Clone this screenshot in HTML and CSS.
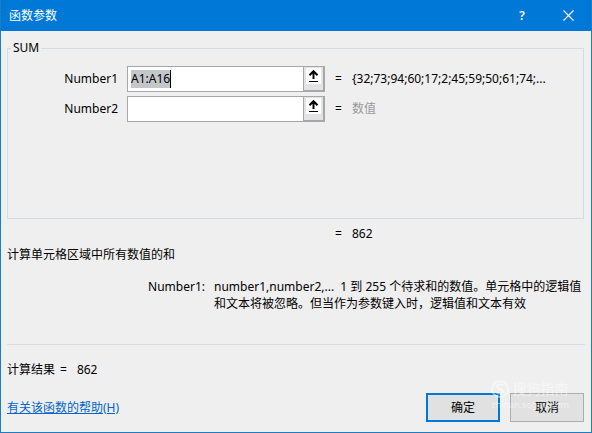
FILE: index.html
```html
<!DOCTYPE html>
<html lang="zh-CN">
<head>
    <meta charset="UTF-8">
    <meta name="viewport" content="width=device-width, initial-scale=1.0">
    <title>函数参数</title>
    <link rel="stylesheet" href="styles.css">
</head>
<body>

<div class="dialog">
    <header class="titlebar">
        <h1>函数参数</h1>
        <button type="button" class="title-btn" aria-label="帮助">?</button>
        <button type="button" class="title-btn" aria-label="关闭">
            <svg width="11" height="11" viewBox="0 0 11 11"><path d="M.5 .5l10 10M10.5 .5l-10 10" fill="none" stroke="#fff" stroke-width="1.1"/></svg>
        </button>
    </header>

    <form class="content">
        <fieldset class="arguments">
            <legend>SUM</legend>
            <div class="arg-row">
                <label for="number1">Number1</label>
                <div class="ref-box">
                    <span class="ref-field"><input type="text" id="number1" class="selected" value="A1:A16"></span>
                    <button type="button" class="ref-btn" aria-label="选择 Number1 区域">
                        <svg width="15" height="16" viewBox="0 0 15 16"><rect width="15" height="16" fill="#fff"/><path d="M3.5 7.2l4-4 4 4M7.5 3.5V11" fill="none" stroke="#000" stroke-width="2"/><path d="M3 13.5h9" stroke="#000"/></svg>
                    </button>
                </div>
                <span class="equals">=</span>
                <output class="value">{32;73;94;60;17;2;45;59;50;61;74;...</output>
            </div>
            <div class="arg-row">
                <label for="number2">Number2</label>
                <div class="ref-box">
                    <span class="ref-field"><input type="text" id="number2"></span>
                    <button type="button" class="ref-btn" aria-label="选择 Number2 区域">
                        <svg width="15" height="16" viewBox="0 0 15 16"><rect width="15" height="16" fill="#fff"/><path d="M3.5 7.2l4-4 4 4M7.5 3.5V11" fill="none" stroke="#000" stroke-width="2"/><path d="M3 13.5h9" stroke="#000"/></svg>
                    </button>
                </div>
                <span class="equals">=</span>
                <output class="value empty">数值</output>
            </div>
        </fieldset>

        <div class="total">
            <span class="equals">=</span>
            <output class="value">862</output>
        </div>

        <p class="summary">计算单元格区域中所有数值的和</p>

        <dl class="description">
            <dt>Number1:</dt>
            <dd>number1,number2,...&nbsp; 1 到 255 个待求和的数值。单元格中的逻辑值和文本将被忽略。但当作为参数键入时，逻辑值和文本有效</dd>
        </dl>

        <p class="result"><span>计算结果</span><span>=</span><output>862</output></p>

        <footer class="footer">
            <a href="#help">有关该函数的帮助(H)</a>
            <div class="actions">
                <button type="submit" class="btn primary">确定</button>
                <button type="button" class="btn">取消</button>
            </div>
        </footer>
    </form>

    <div class="watermark">
        <svg width="18" height="18" viewBox="0 0 18 18"><circle cx="9" cy="9" r="8" fill="none" stroke="#fff" stroke-width="2"/><path d="M12.5 5.5C10.500 4 6 4 6 6.500S12 9 12 11.500 7.500 14 5.500 12.500" fill="none" stroke="#fff" stroke-width="2"/></svg>
        <span class="watermark-name">搜狗指南</span>
        <span class="watermark-site">zhinan.sogou.com</span>
    </div>
</div>

</body>
</html>
```
FILE: styles.css
```css
/* Global Styles */
* {
    box-sizing: border-box;
}

body {
    margin: 0;
    font-family: "Noto Sans", "Noto Sans CJK SC", sans-serif;
    font-size: 12px;
    line-height: 18px;
    color: #000;
    background-color: #efefef;
}

button, input {
    font: inherit;
    color: inherit;
}

p, dl, dd {
    margin: 0;
}

.dialog {
    position: relative;
    display: flex;
    flex-direction: column;
    min-height: 100vh;
    border: 1px solid #1c7cc4;
    border-top: none;
}

/* Title bar */
.titlebar {
    display: flex;
    height: 31px;
    padding-left: 8px;
    align-items: center;
    background-color: #0078d7;
    color: #fff;
}

.titlebar h1 {
    flex: 1;
    margin: 0;
    font-size: 12px;
    font-weight: normal;
}

.title-btn {
    display: flex;
    width: 46px;
    height: 31px;
    padding: 0;
    align-items: center;
    justify-content: center;
    border: none;
    background: none;
    font-weight: 600;
}

.content {
    display: flex;
    flex: 1;
    flex-direction: column;
    padding: 8px 6px 10px;
}

/* Arguments */
.arguments {
    min-height: 180px;
    margin: 0 1px 0 0;
    padding: 9px 0 0;
    border: 1px solid #d3dce3;
}

.arguments legend {
    margin-left: 3px;
    padding: 0 2px;
}

.arg-row {
    display: flex;
    align-items: center;
    margin-bottom: 4px;
}

.arg-row label {
    width: 110px;
    margin-right: 9px;
    text-align: right;
}

.ref-box {
    display: flex;
    width: 198px;
    height: 26px;
    border: 1px solid #a5a7aa;
    background-color: #fff;
}

.ref-field {
    flex: 1;
    padding: 3px;
}

.ref-field input {
    width: 100%;
    height: 18px;
    padding: 0;
    border: none;
    outline: none;
    background: none;
}

/* the reference text is selected, with the caret after it */
.ref-field .selected {
    width: auto;
    field-sizing: content;
    border-right: 1px solid #000;
    background-color: #c3c7c9;
}

.ref-btn {
    display: flex;
    width: 21px;
    padding: 1px;
    justify-content: center;
    border: 1px solid #a5a7aa;
    border-width: 0 1px 1px 1px;
    background-color: #e3e3e3;
}

.equals {
    width: 17px;
    margin-left: 10px;
}

.empty {
    color: #999;
}

.total {
    display: flex;
    margin: 6px 0 3px 318px;
}

.summary {
    margin-bottom: 14px;
}

.description {
    display: flex;
    line-height: 17px;
    padding-bottom: 32px;
    border-bottom: 1px solid #d9dcde;
}

.description dt {
    flex: none;
    width: 198px;
    margin-right: 9px;
    text-align: right;
}

.description dd {
    flex: 1;
}

.result {
    display: flex;
    gap: 5px;
    margin-top: 16px;
}

.result output {
    margin-left: 5px;
}

/* Footer */
.footer {
    display: flex;
    margin-top: auto;
    align-items: center;
    justify-content: space-between;
}

.footer a {
    color: #0066cc;
}

.actions {
    display: flex;
    gap: 10px;
    margin-right: 1px;
}

.btn {
    width: 74px;
    height: 29px;
    padding: 0;
    border: 1px solid #adadad;
    background-color: #e1e1e1;
}

.btn.primary {
    border: 2px solid #0078d7;
}

/* Watermark */
.watermark {
    position: absolute;
    right: 22px;
    bottom: 20px;
    display: grid;
    grid-template-columns: 18px auto;
    column-gap: 3px;
    align-items: center;
    color: #fff;
    opacity: 0.5;
    pointer-events: none;
}

.watermark-name {
    font-size: 14px;
}

.watermark-site {
    grid-column: 1 / 3;
    font-size: 9px;
    line-height: 14px;
}
```
